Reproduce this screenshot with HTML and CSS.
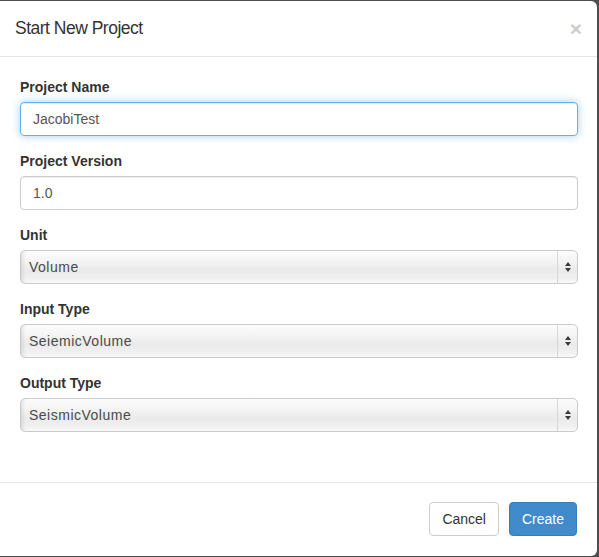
FILE: index.html
```html
<!DOCTYPE html>
<html>
<head>
<meta charset="utf-8">
<link rel="stylesheet" href="styles.css">
</head>
<body>
<div class="modal">
  <div class="modal-header">
    <h4 class="modal-title">Start New Project</h4>
    <span class="close">×</span>
  </div>
  <div class="modal-body">
    <div class="form-group">
      <label>Project Name</label>
      <div class="input focus">JacobiTest</div>
    </div>
    <div class="form-group">
      <label>Project Version</label>
      <div class="input">1.0</div>
    </div>
    <div class="form-group">
      <label>Unit</label>
      <div class="select"><span class="val">Volume</span><span class="arrows"><svg width="8" height="12" viewBox="0 0 8 12"><path d="M4 1 L7 5 L1 5 Z M1 7 L7 7 L4 11 Z" fill="#3a3a3a"/></svg></span></div>
    </div>
    <div class="form-group">
      <label>Input Type</label>
      <div class="select"><span class="val">SeiemicVolume</span><span class="arrows"><svg width="8" height="12" viewBox="0 0 8 12"><path d="M4 1 L7 5 L1 5 Z M1 7 L7 7 L4 11 Z" fill="#3a3a3a"/></svg></span></div>
    </div>
    <div class="form-group">
      <label>Output Type</label>
      <div class="select"><span class="val">SeismicVolume</span><span class="arrows"><svg width="8" height="12" viewBox="0 0 8 12"><path d="M4 1 L7 5 L1 5 Z M1 7 L7 7 L4 11 Z" fill="#3a3a3a"/></svg></span></div>
    </div>
  </div>
  <div class="modal-footer">
    <button class="btn btn-default">Cancel</button>
    <button class="btn btn-primary">Create</button>
  </div>
</div>
</body>
</html>
```
FILE: styles.css
```css
html, body {
  margin: 0;
  padding: 0;
}
body {
  background: #4e4e4e;
  height: 557px;
  overflow: hidden;
  font-family: "Liberation Sans", Arial, sans-serif;
  font-size: 14px;
  color: #333;
}
.modal {
  width: 597px;
  margin-top: 1px;
  background: #fff;
  border-radius: 0 6px 6px 0;
}
.modal-header {
  display: flex;
  justify-content: space-between;
  align-items: flex-start;
  padding: 15px;
  border-bottom: 1px solid #e5e5e5;
}
.modal-title {
  margin: 0;
  font-size: 17.5px;
  font-weight: normal;
  line-height: 25px;
  letter-spacing: -0.5px;
  color: #333;
}
.close {
  font-size: 21px;
  font-weight: bold;
  line-height: 1;
  color: #000;
  opacity: 0.2;
  margin-top: 2px;
}
.modal-body {
  padding: 20px 19px 20px 20px;
}
.form-group {
  margin-bottom: 15px;
}
.form-group label {
  display: block;
  font-weight: bold;
  line-height: 20px;
  margin-bottom: 5px;
}
.input {
  box-sizing: border-box;
  height: 34px;
  padding: 6px 12px;
  line-height: 20px;
  color: #555;
  border: 1px solid #ccc;
  border-radius: 4px;
  box-shadow: inset 0 1px 1px rgba(0,0,0,.075);
}
.input.focus {
  border-color: #66afe9;
  box-shadow: inset 0 1px 1px rgba(0,0,0,.075), 0 0 8px rgba(102,175,233,.6);
}
.select {
  box-sizing: border-box;
  height: 34px;
  display: flex;
  align-items: center;
  justify-content: space-between;
  border: 1px solid #cacaca;
  border-radius: 5px;
  background: linear-gradient(to bottom, #fcfcfc 0%, #f3f3f3 35%, #eaeaea 60%, #f0f0f0 85%, #f9f9f9 100%);
  box-shadow: inset 5px 0 4px -4px rgba(0,0,0,.14);
  color: #4a4a4a;
}
.select .val {
  padding-left: 8px;
  letter-spacing: 0.5px;
}
.select .arrows {
  width: 19px;
  height: 100%;
  border-left: 1px solid #d8d8d8;
  display: flex;
  align-items: center;
  justify-content: center;
}
.modal-footer {
  margin-top: 15px;
  padding: 19px 20px 20px 20px;
  border-top: 1px solid #e5e5e5;
  display: flex;
  justify-content: flex-end;
  gap: 10px;
}
.btn {
  box-sizing: border-box;
  height: 34px;
  padding: 6px 12px;
  font-family: "Liberation Sans", Arial, sans-serif;
  font-size: 14px;
  line-height: 20px;
  border: 1px solid transparent;
  border-radius: 4px;
  margin: 0;
}
.btn-default {
  background: #fff;
  border-color: #ccc;
  color: #333;
}
.btn-primary {
  background: #428bca;
  border-color: #357ebd;
  color: #fff;
}
```
